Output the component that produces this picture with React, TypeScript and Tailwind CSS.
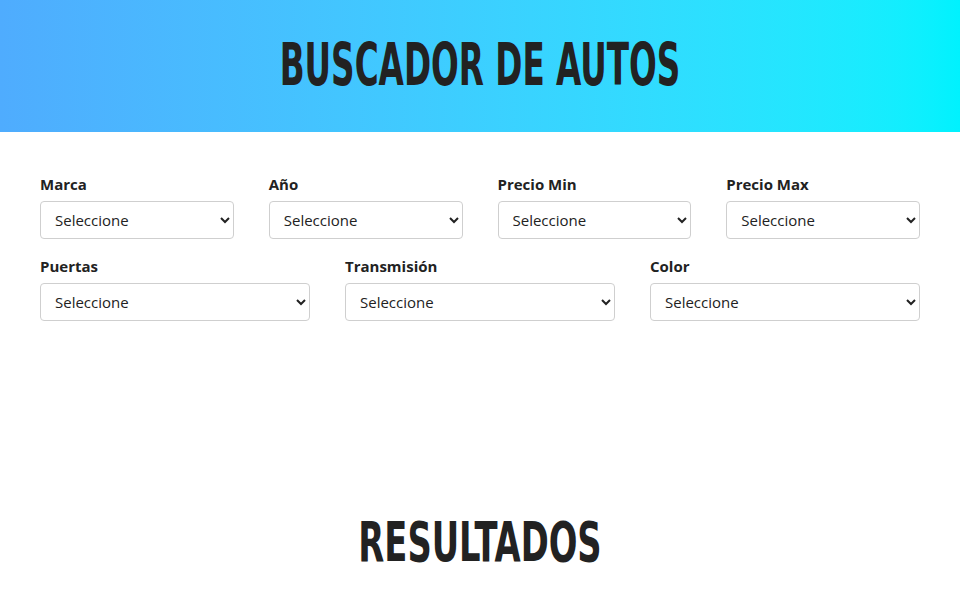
import React from "react";

const filasSuperiores = ["Marca", "Año", "Precio Min", "Precio Max"];
const filasInferiores = ["Puertas", "Transmisión", "Color"];

function Campo({ label }: { label: string }) {
  return (
    <div className="flex flex-col">
      <label className="text-[15px] font-bold text-[#222] leading-[20px] mb-[7px]">{label}</label>
      <select className="h-[38px] w-full rounded-[4px] border border-[#cfcfcf] bg-white pl-[10px] pr-[10px] text-[15px] text-[#222] outline-none">
        <option>Seleccione</option>
      </select>
    </div>
  );
}

export default function App() {
  const titulo = "font-bold uppercase text-[#222] leading-none tracking-normal [font-family:'DejaVu_Sans_Condensed','DejaVu_Sans',sans-serif]";
  return (
    <div className="min-h-screen bg-white [font-family:'Open_Sans',sans-serif]">
      <header className="h-[132px] flex items-center justify-center bg-gradient-to-r from-[#4facfe] to-[#00f2fe]">
        <h1 className={`${titulo} text-[58px] whitespace-nowrap scale-x-[0.626] -translate-y-[1px]`}>Buscador de Autos</h1>
      </header>

      <main className="px-10 pt-[42px]">
        <div className="grid grid-cols-4 gap-x-[35px]">
          {filasSuperiores.map((l) => (
            <Campo key={l} label={l} />
          ))}
        </div>
        <div className="grid grid-cols-3 gap-x-[35px] mt-[17px]">
          {filasInferiores.map((l) => (
            <Campo key={l} label={l} />
          ))}
        </div>
        <h2 className={`${titulo} text-[56px] text-center mt-[193px] scale-x-[0.67]`}>Resultados</h2>
      </main>
    </div>
  );
}
